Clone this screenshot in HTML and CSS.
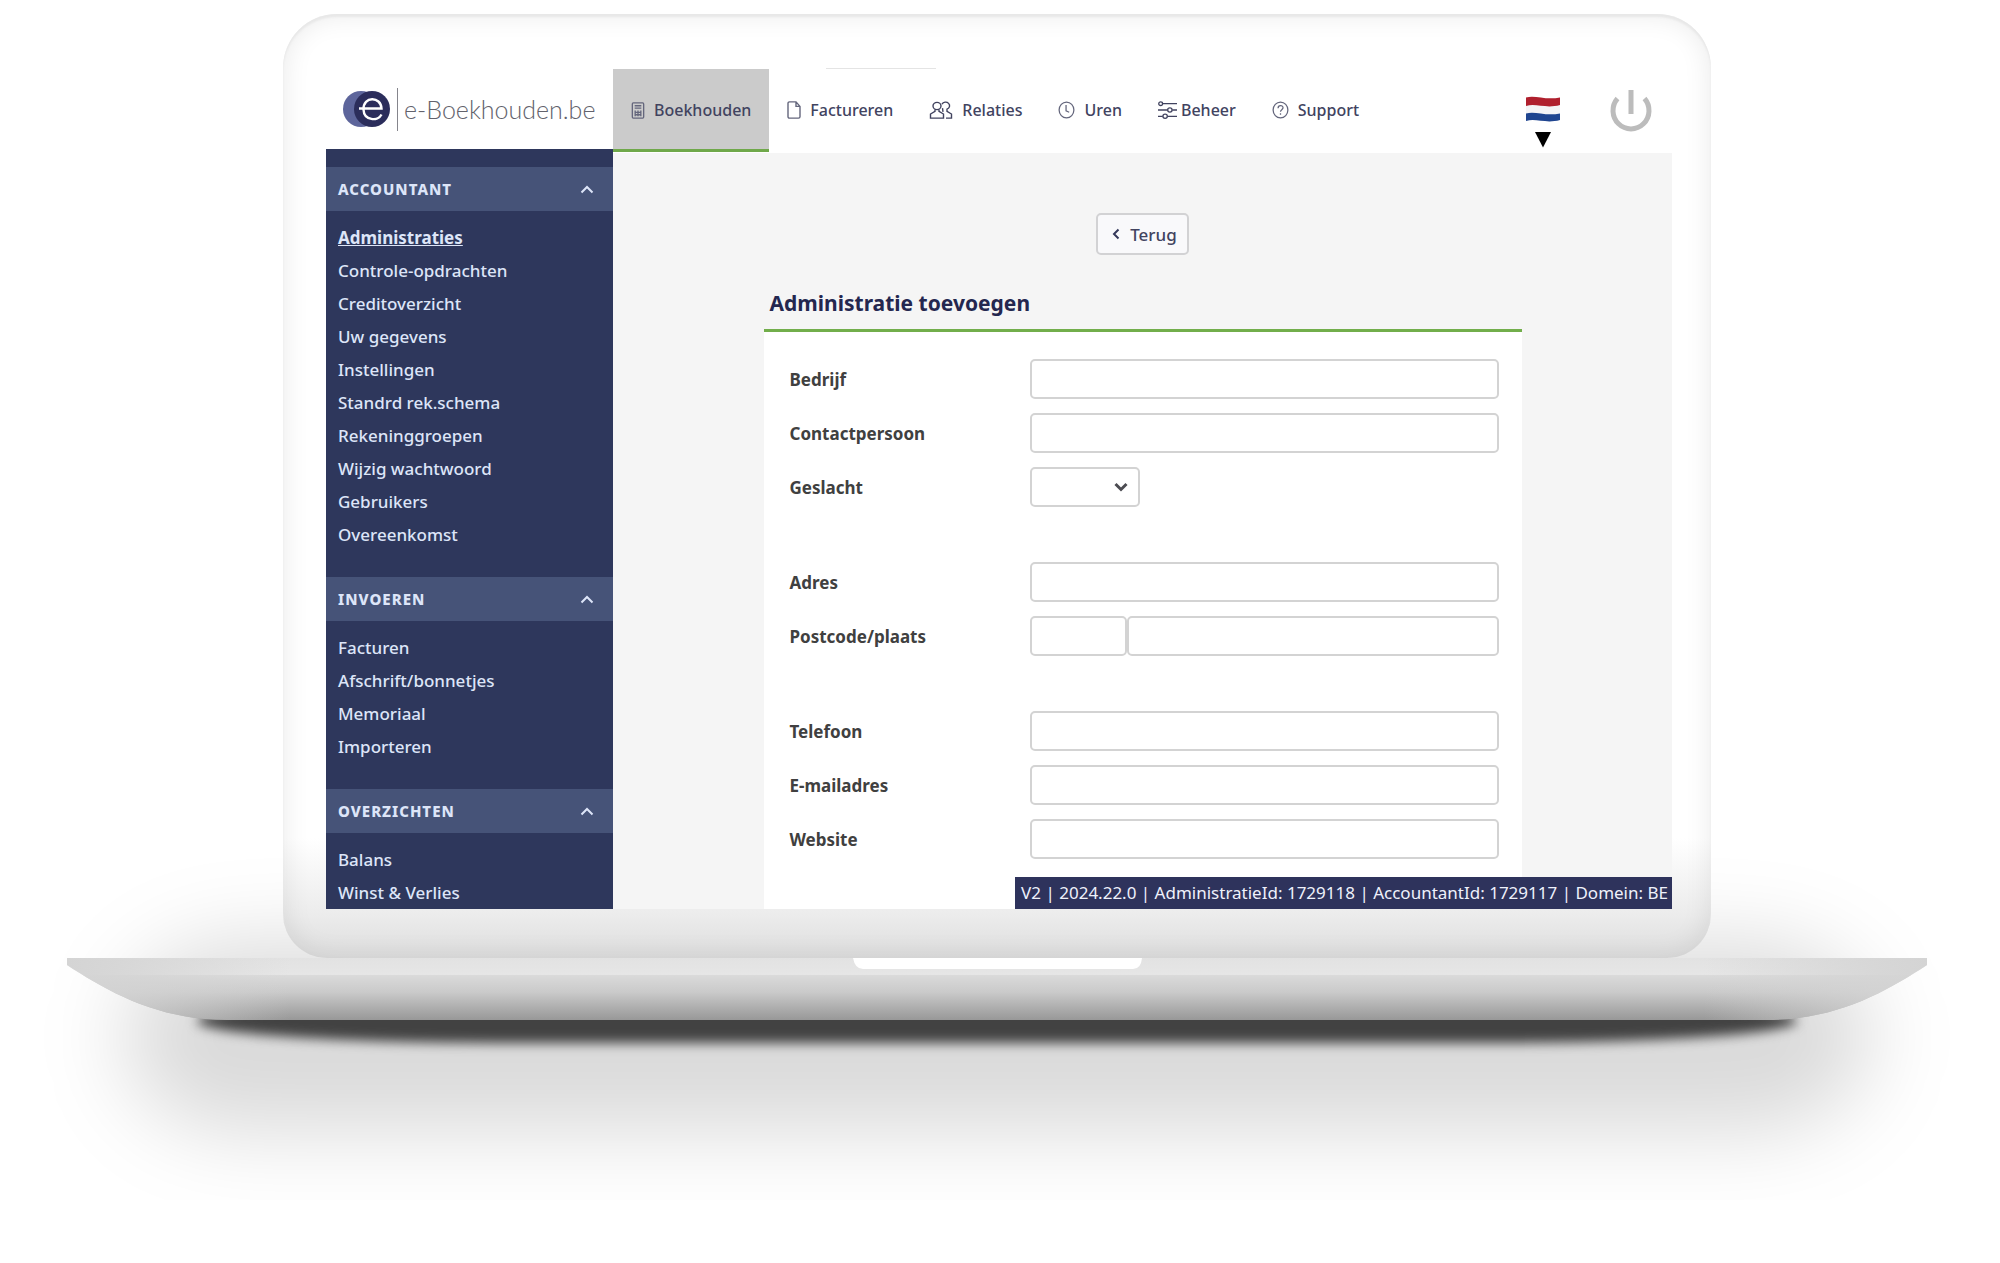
FILE: index.html
```html
<!DOCTYPE html>
<html lang="nl">
<head>
<meta charset="utf-8">
<meta name="viewport" content="width=device-width, initial-scale=1">
<title>e-Boekhouden.be</title>
<link rel="stylesheet" href="styles.css">
</head>
<body>
<div class="laptop">
  <div class="lid">
    <div class="screen">
      <aside class="side">
        <a class="logo" href="#">
          <svg class="logo-mark" viewBox="0 0 48 38" aria-hidden="true">
            <circle cx="18" cy="19" r="18" fill="#5d659b"/>
            <circle cx="29" cy="19" r="18" fill="#2b2d5b"/>
            <path d="M16 18.500H38.500C38 6 20 6 20.500 19.500C21 31 35 31.500 38.500 24.500" fill="none" stroke="#fff" stroke-width="2.400"/>
          </svg>
          <span class="logo-text">e-Boekhouden.be</span>
        </a>
        <nav class="menu">
          <section class="menu-group">
            <button class="menu-head" type="button">ACCOUNTANT
              <svg class="chevron" viewBox="0 0 14 9" aria-hidden="true"><path d="M1.500 7.500 7 2l5.500 5.500"/></svg></button>
            <ul class="menu-list">
              <li><a class="current" href="#">Administraties</a></li>
              <li><a href="#">Controle-opdrachten</a></li>
              <li><a href="#">Creditoverzicht</a></li>
              <li><a href="#">Uw gegevens</a></li>
              <li><a href="#">Instellingen</a></li>
              <li><a href="#">Standrd rek.schema</a></li>
              <li><a href="#">Rekeninggroepen</a></li>
              <li><a href="#">Wijzig wachtwoord</a></li>
              <li><a href="#">Gebruikers</a></li>
              <li><a href="#">Overeenkomst</a></li>
            </ul>
          </section>
          <section class="menu-group">
            <button class="menu-head" type="button">INVOEREN
              <svg class="chevron" viewBox="0 0 14 9" aria-hidden="true"><path d="M1.500 7.500 7 2l5.500 5.500"/></svg></button>
            <ul class="menu-list">
              <li><a href="#">Facturen</a></li>
              <li><a href="#">Afschrift/bonnetjes</a></li>
              <li><a href="#">Memoriaal</a></li>
              <li><a href="#">Importeren</a></li>
            </ul>
          </section>
          <section class="menu-group">
            <button class="menu-head" type="button">OVERZICHTEN
              <svg class="chevron" viewBox="0 0 14 9" aria-hidden="true"><path d="M1.500 7.500 7 2l5.500 5.500"/></svg></button>
            <ul class="menu-list">
              <li><a href="#">Balans</a></li>
              <li><a href="#">Winst &amp; Verlies</a></li>
            </ul>
          </section>
        </nav>
      </aside>

      <div class="content">
        <header class="topbar">
          <nav class="tabs">
            <a class="tab active" href="#">
              <svg class="icon" viewBox="0 0 14 18" width="14" height="17" aria-hidden="true"><rect x="1" y="1" width="12" height="16" rx="1"/><path d="M3.500 4h7M3.500 6.500h7M4 9v6M7 9v6M10 9v6M3.500 11h7M3.500 13.500h7"/></svg>
              Boekhouden</a>
            <a class="tab" href="#">
              <svg class="icon" viewBox="0 0 14 20" preserveAspectRatio="none" width="14" height="18" aria-hidden="true"><path d="M1 2.500Q1 1 2.500 1H9l4 5v11.500q0 1.500-1.500 1.500h-9Q1 19 1 17.500zM9 1v5h4"/></svg>
              Factureren</a>
            <a class="tab" href="#">
              <svg class="icon dark" viewBox="0 0 24 20" preserveAspectRatio="none" width="24" height="18" aria-hidden="true"><circle cx="8" cy="5.500" r="4"/><path d="M6 9.500v2L1.500 14.500V19h13v-4.500L10 11.500v-2"/><path d="M13 3.500a4 4 0 1 1 5 5.500v2.500l4.500 3V19H17M13.500 8l.5 4"/></svg>
              Relaties</a>
            <a class="tab" href="#">
              <svg class="icon" viewBox="0 0 18 20" width="17" height="18" aria-hidden="true"><ellipse cx="9" cy="10" rx="8.200" ry="8.800"/><path d="M8.500 4.500V11l3.500 1.500"/></svg>
              Uren</a>
            <a class="tab tight" href="#">
              <svg class="icon dark" viewBox="0 0 20 20" preserveAspectRatio="none" width="19" height="18" aria-hidden="true"><path d="M5 3h15M0 10h10M15 10h5M0 17h5M10 17h10"/><circle cx="2.800" cy="3" r="2"/><circle cx="12.500" cy="10" r="2.300"/><circle cx="7.500" cy="17" r="2.300"/></svg>
              Beheer</a>
            <a class="tab" href="#">
              <svg class="icon" viewBox="0 0 18 20" width="17" height="18" aria-hidden="true"><ellipse cx="9" cy="10" rx="8.200" ry="8.800"/><path d="M6.300 8C6.300 4 12 4.200 11.800 7.700c-.2 2-2.800 2-2.800 4.300M9 13.700v1.600"/></svg>
              Support</a>
          </nav>
          <div class="tools">
            <button class="plain flag" type="button" aria-label="Nederlands">
              <svg viewBox="0 0 34 52" width="34" height="52" aria-hidden="true">
                <path d="M0 1.500c9-3 19 3 34 0V24c-14 4-24-2-34 1z" fill="#f4f4f6"/>
                <path d="M0 1.500c9-3 19 3 34 0V9c-14 4-24-2-34 1z" fill="#b0202e"/>
                <path d="M0 17.500c9-3 19 3 34 0V24c-14 4-24-2-34 1z" fill="#1f4590"/>
                <path d="M9 36h16L17 51.500z" fill="#000"/>
              </svg>
            </button>
            <button class="plain" type="button" aria-label="Uitloggen">
              <svg viewBox="0 0 42 42" width="42" height="42" fill="none" stroke="#bcbcbc" stroke-width="5" aria-hidden="true"><path d="M21 0v24M7.500 8.500a18 18.300 0 1 0 27 0"/></svg>
            </button>
          </div>
        </header>

        <main class="main">
          <button class="back" type="button">
            <svg viewBox="0 0 8 12" width="8" height="12" fill="none" stroke="#34385a" stroke-width="2" aria-hidden="true"><path d="M6.500 1.500 2 6l4.500 4.500"/></svg>
            Terug</button>
          <form class="panel">
            <h1 class="title">Administratie toevoegen</h1>
            <div class="fields">
              <div class="group">
                <div class="row"><label for="bedrijf">Bedrijf</label><input id="bedrijf" type="text"></div>
                <div class="row"><label for="contact">Contactpersoon</label><input id="contact" type="text"></div>
                <div class="row"><label for="geslacht">Geslacht</label>
                  <div class="select">
                    <select id="geslacht"><option></option><option>Man</option><option>Vrouw</option></select>
                    <svg class="caret" viewBox="0 0 14 10" aria-hidden="true"><path d="M1.500 2 7 7.500 12.500 2"/></svg>
                  </div></div>
              </div>
              <div class="group">
                <div class="row"><label for="adres">Adres</label><input id="adres" type="text"></div>
                <div class="row"><label for="postcode">Postcode/plaats</label>
                  <div class="pair"><input id="postcode" type="text"><input type="text" aria-label="Plaats"></div></div>
              </div>
              <div class="group">
                <div class="row"><label for="telefoon">Telefoon</label><input id="telefoon" type="tel"></div>
                <div class="row"><label for="email">E-mailadres</label><input id="email" type="email"></div>
                <div class="row"><label for="website">Website</label><input id="website" type="url"></div>
              </div>
            </div>
          </form>
        </main>
      </div>
      <div class="status">V2 | 2024.22.0 | AdministratieId: 1729118 | AccountantId: 1729117 | Domein: BE</div>
    </div>
  </div>
  <svg class="base" viewBox="0 0 1860 62" preserveAspectRatio="none" aria-hidden="true">
    <defs>
      <linearGradient id="body" x1="0" y1="0" x2="0" y2="1">
        <stop offset="0" stop-color="#e2e2e2"/><stop offset=".27" stop-color="#e6e6e6"/>
        <stop offset=".28" stop-color="#dadada"/><stop offset=".55" stop-color="#cacaca"/>
        <stop offset=".8" stop-color="#aeaeae"/><stop offset="1" stop-color="#989898"/>
      </linearGradient>
      <linearGradient id="ends" x1="0" y1="0" x2="1" y2="0">
        <stop offset="0" stop-color="#d4d4d4"/><stop offset=".03" stop-color="#d4d4d4" stop-opacity=".8"/><stop offset=".12" stop-color="#d4d4d4" stop-opacity="0"/>
        <stop offset=".88" stop-color="#d4d4d4" stop-opacity="0"/><stop offset=".97" stop-color="#d4d4d4" stop-opacity=".8"/><stop offset="1" stop-color="#d4d4d4"/>
      </linearGradient>
    </defs>
    <path d="M0 0H1860V7C1820 33 1770 62 1700 62H160C90 62 40 33 0 7z" fill="url(#body)"/>
    <path d="M0 0H1860V7C1820 33 1770 62 1700 62H160C90 62 40 33 0 7z" fill="url(#ends)"/>
    <path d="M786 0H1075Q1074 11 1066 11H796Q788 11 786 0z" fill="#fff"/>
  </svg>
</div>
</body>
</html>
```
FILE: styles.css
```css
*, *::before, *::after { box-sizing: border-box; }

body {
  margin: 0;
  background: #fff;
  font-family: "Noto Sans", "Open Sans", sans-serif;
  font-size: 16px;
  overflow-x: hidden;
}

button, input, select { font: inherit; }
a { color: inherit; text-decoration: none; }

/* Laptop frame */
.laptop {
  position: relative;
  z-index: 0;
  display: flex;
  flex-direction: column;
  align-items: center;
  max-width: 1860px;
  margin: 0 auto;
  padding: 14px 0 180px;
  right: 3px;
}
/* Wide soft shadow, then the dark contact shadow */
.laptop::before,
.laptop::after {
  content: "";
  position: absolute;
  z-index: -1;
}
.laptop::before {
  left: 56px;
  right: 56px;
  bottom: 68px;
  height: 190px;
  border-radius: 120px / 95px;
  background: rgba(0, 0, 0, 0.145);
  filter: blur(42px);
}
.laptop::after {
  left: 130px;
  right: 130px;
  bottom: 157px;
  height: 44px;
  border-radius: 300px / 22px;
  background: #424242;
  filter: blur(6px);
}
.lid {
  position: relative;
  width: 100%;
  max-width: 1428px;
  padding: 55px 39px 49px 43px;
  border-radius: 54px 54px 44px 44px;
  background: linear-gradient(to top, #dedede 0, #ececec 44px, #fff 120px);
  box-shadow: inset 0 3px 2px #e8e8e8, inset 0 0 28px rgba(0, 0, 0, 0.09);
}
.lid::before {
  content: "";
  position: absolute;
  top: 54px;
  left: 543px;
  width: 110px;
  height: 1px;
  background: #e4e4e4;
}
.base {
  display: block;
  width: 100%;
  height: 62px;
}

/* Application */
.screen {
  position: relative;
  display: grid;
  grid-template-columns: 287px 1fr;
  background: #fff;
}
.side {
  display: flex;
  flex-direction: column;
}
.logo {
  display: flex;
  align-items: center;
  gap: 6px;
  height: 80px;
  padding-left: 17px;
}
.logo-mark { width: 48px; height: 38px; }
.logo-text {
  padding-left: 6px;
  border-left: 1px solid #85858c;
  font: 300 25px/43px Lato, sans-serif;
  color: #62626c;
}
.menu {
  flex: 1;
  padding-top: 18px;
  background: #2e375c;
  color: #dde5f8;
}
.menu-group { padding-bottom: 26px; }
.menu-group:last-child { padding-bottom: 0; }
.menu-head {
  display: flex;
  align-items: center;
  justify-content: space-between;
  width: 100%;
  height: 44px;
  padding: 0 19px 0 12px;
  border: 0;
  background: #465378;
  color: inherit;
  font-size: 15px;
  font-weight: 800;
  letter-spacing: 1px;
}
.chevron, .caret {
  width: 14px;
  height: 9px;
  fill: none;
  stroke: currentColor;
  stroke-width: 2;
}
.menu-list {
  margin: 0;
  padding: 10px 12px 0;
  list-style: none;
  font-size: 17px;
  line-height: 33px;
  font-weight: 500;
}
.menu-list .current {
  font-weight: 700;
  text-decoration: underline;
}

.content {
  display: flex;
  flex-direction: column;
}
.topbar {
  display: flex;
  justify-content: space-between;
  height: 84px;
}
.tabs { display: flex; }
.tab {
  display: flex;
  align-items: center;
  gap: 9px;
  height: 83px;
  padding: 2px 18px 0;
  border-bottom: 3px solid transparent;
  color: #41435f;
  font-weight: 500;
}
.tab.tight { gap: 4px; }
.tab.active {
  border-color: #6fa84a;
  background: #cbcbcb;
}
.icon {
  flex: none;
  fill: none;
  stroke: #64667c;
  stroke-width: 1.4;
}
.icon.dark { stroke: #41435f; }
.tools {
  display: flex;
  align-items: center;
  gap: 50px;
  padding-right: 20px;
}
.plain {
  display: flex;
  padding: 0;
  border: 0;
  background: none;
}
.flag { padding-top: 22px; }

.main {
  flex: 1;
  display: flex;
  flex-direction: column;
  align-items: center;
  padding-top: 60px;
  background: #f5f5f5;
}
.back {
  display: flex;
  align-items: center;
  gap: 10px;
  height: 42px;
  padding: 0 10px 0 14px;
  border: 2px solid #d2d2d4;
  border-radius: 5px;
  background: #f9f9fb;
  color: #41435f;
  font-size: 17px;
  font-weight: 500;
}
.panel {
  flex: 1;
  display: flex;
  flex-direction: column;
  width: 100%;
  max-width: 758px;
}
.title {
  margin: 0;
  padding: 26px 6px 4px;
  border-bottom: 3px solid #72ae4b;
  color: #24274f;
  font-size: 21px;
  line-height: 44px;
  font-weight: 700;
}
.fields {
  flex: 1;
  display: flex;
  flex-direction: column;
  gap: 55px;
  padding: 27px 23px 27px 26px;
  background: #fff;
}
.group {
  display: flex;
  flex-direction: column;
  gap: 14px;
}
.row {
  display: grid;
  grid-template-columns: 240px 1fr;
  align-items: center;
}
.row label {
  color: #404040;
  font-size: 17px;
  font-weight: 700;
}
.row input, .row select {
  width: 100%;
  min-width: 0;
  height: 40px;
  padding: 0 10px;
  border: 2px solid #d3d3d3;
  border-radius: 5px;
  background: #fff;
}
.select {
  display: grid;
  align-items: center;
  width: 110px;
}
.select > * { grid-area: 1 / 1; }
.select select { appearance: none; }
.caret {
  justify-self: end;
  height: 10px;
  margin-right: 12px;
  stroke: #4c4c52;
  stroke-width: 3;
  pointer-events: none;
}
.pair {
  display: grid;
  grid-template-columns: 97px 1fr;
}
.status {
  position: absolute;
  right: 0;
  bottom: 0;
  padding: 0 4px 0 6px;
  background: #2e335c;
  color: #eef1fb;
  font-size: 17px;
  line-height: 32px;
}
```
